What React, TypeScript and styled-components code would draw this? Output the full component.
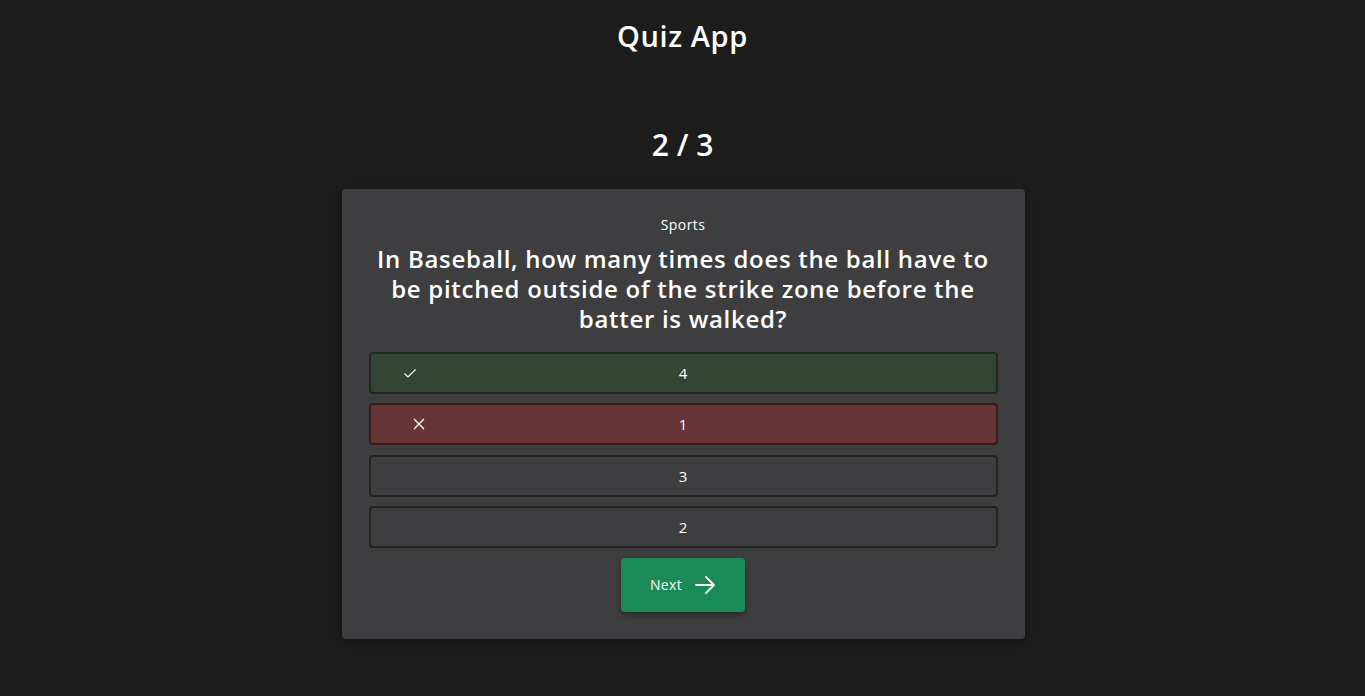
import React from "react";
import styled, { createGlobalStyle } from "styled-components";

const Global = createGlobalStyle`
  html, body { margin: 0; padding: 0; background: #1c1c1d; }
  body { font-family: "Open Sans", "Noto Sans", sans-serif; color: #fff; }
  * { box-sizing: border-box; }
`;

const Page = styled.div`
  min-height: 696px;
  display: flex;
  flex-direction: column;
  align-items: center;
  padding-top: 17px;
`;

const Title = styled.h1`
  margin: 0;
  font-size: 29px;
  font-weight: 600;
  line-height: 38px;
  letter-spacing: 0.6px;
`;

const Counter = styled.h2`
  margin: 70px 0 0;
  font-size: 30px;
  font-weight: 600;
  line-height: 40px;
`;

const Card = styled.div`
  margin-top: 24px;
  margin-left: 1px;
  width: 683px;
  background: #3e3e40;
  border-radius: 4px;
  box-shadow: 0 2px 8px rgba(0, 0, 0, 0.35);
  padding: 26px 27px 27px;
  display: flex;
  flex-direction: column;
  align-items: center;
`;

const Category = styled.div`
  font-size: 14px;
  line-height: 20px;
  letter-spacing: 0.4px;
`;

const Question = styled.div`
  margin-top: 9px;
  max-width: 620px;
  font-size: 24px;
  font-weight: 600;
  line-height: 30px;
  letter-spacing: 0.7px;
  text-align: center;
`;

const Options = styled.div`
  margin-top: 18px;
  width: 100%;
  display: flex;
  flex-direction: column;
  gap: 9.33px;
`;

type Variant = "correct" | "wrong" | "plain";

const bg: Record<Variant, string> = {
  correct: "#334636",
  wrong: "#663535",
  plain: "#3e3e40",
};
const bd: Record<Variant, string> = {
  correct: "#1c2a1e",
  wrong: "#3a1a1b",
  plain: "#242425",
};

const Option = styled.div<{ $v: Variant }>`
  position: relative;
  height: 42px;
  border: 2px solid ${(p) => bd[p.$v]};
  background: ${(p) => bg[p.$v]};
  border-radius: 4px;
  display: flex;
  align-items: center;
  justify-content: center;
  font-size: 15px;
`;

const Mark = styled.span<{ $left: number }>`
  position: absolute;
  left: ${(p) => p.$left}px;
  top: 50%;
  transform: translateY(-50%);
  display: flex;
`;

const NextButton = styled.button`
  margin-top: 10px;
  width: 124px;
  height: 54px;
  border: none;
  border-radius: 4px;
  background: #1a8a57;
  color: #fff;
  font-family: inherit;
  font-size: 14px;
  letter-spacing: 0.3px;
  display: flex;
  align-items: center;
  justify-content: center;
  gap: 12px;
  box-shadow: 0 3px 6px rgba(0, 0, 0, 0.35);
`;

const Check = () => (
  <svg width="14" height="14" viewBox="0 0 14 14" fill="none" stroke="#fff" strokeWidth="1.2">
    <path d="M1.5 7.5 L5 11 L12.5 3.5" />
  </svg>
);

const Cross = () => (
  <svg width="12" height="12" viewBox="0 0 12 12" fill="none" stroke="#fff" strokeWidth="1.2">
    <path d="M1 1 L11 11 M11 1 L1 11" />
  </svg>
);

const Arrow = () => (
  <svg width="22" height="22" viewBox="0 0 22 22" fill="none" stroke="#fff" strokeWidth="1.8" strokeLinecap="round" strokeLinejoin="round">
    <path d="M2 11 H20 M12 3 L20 11 L12 19" />
  </svg>
);

export default function App() {
  return (
    <>
      <Global />
      <Page>
        <Title>Quiz App</Title>
        <Counter>2 / 3</Counter>
        <Card>
          <Category>Sports</Category>
          <Question>
            In Baseball, how many times does the ball have to be pitched outside of the strike zone before the batter is walked?
          </Question>
          <Options>
            <Option $v="correct">
              <Mark $left={32}><Check /></Mark>4
            </Option>
            <Option $v="wrong">
              <Mark $left={42}><Cross /></Mark>1
            </Option>
            <Option $v="plain">3</Option>
            <Option $v="plain">2</Option>
          </Options>
          <NextButton>
            Next <Arrow />
          </NextButton>
        </Card>
      </Page>
    </>
  );
}
